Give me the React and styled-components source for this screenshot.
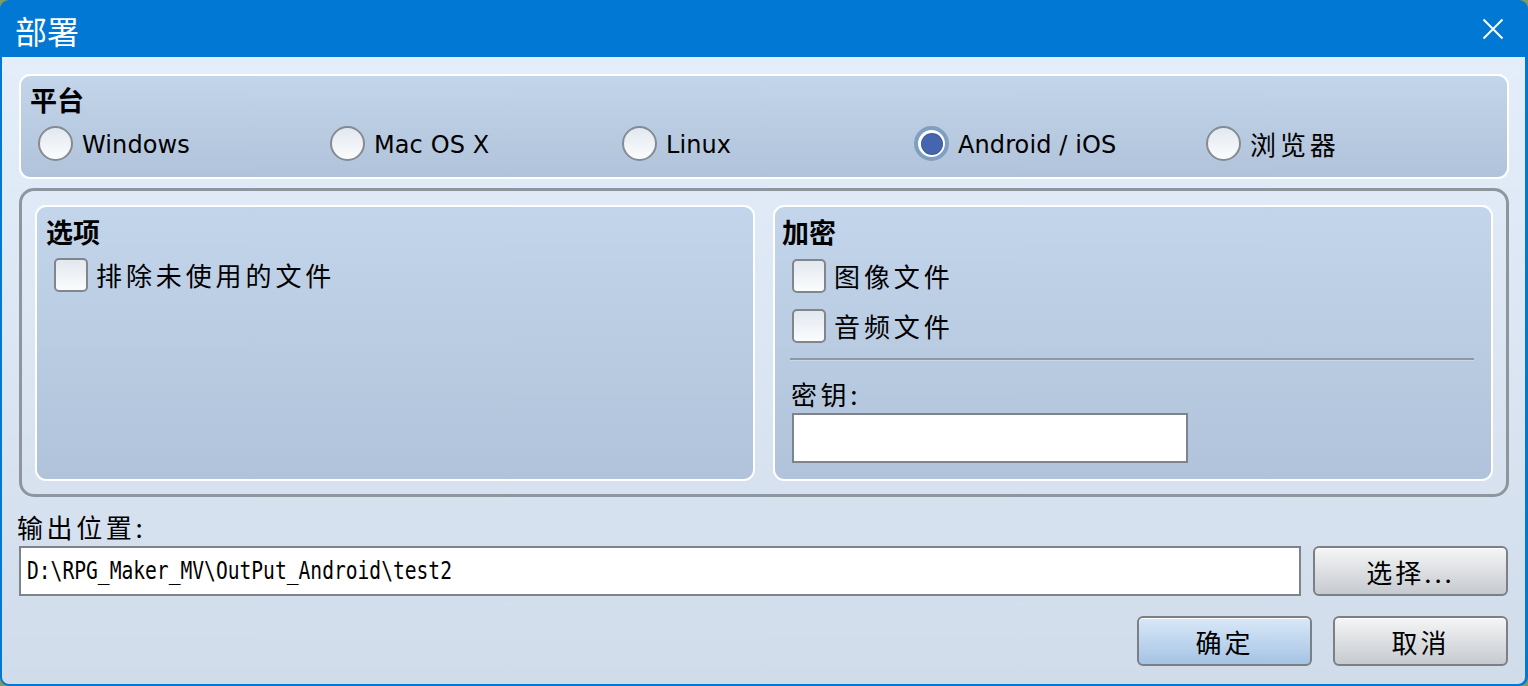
import React from 'react';
import styled, { createGlobalStyle } from 'styled-components';

const GlobalStyle = createGlobalStyle`
  html, body {
    margin: 0;
    padding: 0;
    background: #7f9c5c;
  }
  * {
    box-sizing: border-box;
  }
`;

const Window = styled.div`
  width: 1528px;
  height: 686px;
  display: flex;
  flex-direction: column;
  background: #0078d4;
  border-radius: 9px;
  overflow: hidden;
  font-family: "DejaVu Sans", "Noto Sans CJK SC", sans-serif;
  color: #000;
`;

const TitleBar = styled.div`
  height: 57px;
  flex-shrink: 0;
  display: flex;
  align-items: center;
  justify-content: space-between;
  padding: 2px 24px 0 15px;
  color: #fff;
  font-family: "Noto Sans CJK SC", sans-serif;
  font-size: 32px;
`;

const CloseButton = styled.div`
  width: 22px;
  height: 22px;
  display: flex;
  align-items: center;
  justify-content: center;
  margin-bottom: 2px;
`;

const Body = styled.div`
  flex: 1;
  margin: 0 3px 2px 2px;
  display: flex;
  flex-direction: column;
  padding: 17px 16px 0 17px;
  background: linear-gradient(#e4eefb, #d1dcea);
  border-radius: 0 0 7px 7px;
`;

const Panel = styled.div`
  border: 2px solid #fff;
  border-radius: 11px;
  background: linear-gradient(#c3d5ea, #b0c3da);
  height: ${p => (p.$height ? `${p.$height}px` : 'auto')};
  padding: ${p => p.$padding};
  display: flex;
  flex-direction: column;
`;

const GroupHeader = styled.div`
  font-family: "Noto Sans CJK SC", sans-serif;
  font-weight: 700;
  font-size: 27px;
  line-height: 32px;
  height: 32px;
`;

const RadioRow = styled.div`
  display: flex;
  margin-top: 10px;
  padding-left: 8px;
`;

const RadioItem = styled.label`
  width: 292px;
  display: flex;
  align-items: center;
  gap: 9px;
`;

const Radio = styled.span`
  width: 35px;
  height: 35px;
  border-radius: 50%;
  flex-shrink: 0;
  display: flex;
  align-items: center;
  justify-content: center;
  border: ${p => (p.$checked ? '4px solid #7f9fc2' : '2px solid #868b92')};
  background: ${p => (p.$checked ? '#fff' : 'linear-gradient(#e2e8ef, #fbfcfd)')};

  &::after {
    content: '';
    display: ${p => (p.$checked ? 'block' : 'none')};
    width: 20px;
    height: 20px;
    border-radius: 50%;
    background: #4566ae;
    box-shadow: 0 0 0 1px #3d5c9e;
  }
`;

const Label = styled.span`
  font-family: ${p => (p.$cjk ? '"Noto Sans CJK SC", sans-serif' : '"DejaVu Sans", sans-serif')};
  font-size: ${p => (p.$cjk ? '26px' : '24px')};
  letter-spacing: ${p => (p.$cjk ? '3.9px' : '0.1px')};
  line-height: 32px;
  padding-top: ${p => (p.$cjk ? 0 : 3)}px;
  white-space: nowrap;
`;

const OptionsFrame = styled.div`
  margin-top: 9px;
  height: 309px;
  border: 3px solid #8e959e;
  border-radius: 15px;
  padding: 14px 13px 13px;
  display: grid;
  grid-template-columns: 1fr 1fr;
  gap: 18px;
`;

const CheckRow = styled.label`
  display: flex;
  align-items: center;
  gap: 8px;
  height: 34px;
  margin-top: ${p => p.$top}px;
  padding-left: ${p => p.$indent}px;
`;

const Checkbox = styled.span`
  width: 34px;
  height: 34px;
  flex-shrink: 0;
  border: 2px solid #81868d;
  border-radius: 5px;
  background: linear-gradient(#e2e8ef, #fbfcfd);
`;

const Separator = styled.div`
  margin: 15px 17px 0 8px;
  border-top: 2px solid #8d99a7;
  border-bottom: 1px solid #cbd7e4;
`;

const FieldLabel = styled.div`
  font-family: "Noto Sans CJK SC", sans-serif;
  font-size: 26px;
  letter-spacing: 3.6px;
  line-height: 32px;
  margin-top: ${p => p.$top}px;
  margin-left: ${p => p.$indent || 0}px;
`;

const TextBox = styled.div`
  height: 50px;
  width: ${p => (p.$width ? `${p.$width}px` : 'auto')};
  flex: ${p => (p.$width ? '0 0 auto' : '1')};
  background: #fff;
  border: 2px solid #7e848b;
  display: flex;
  align-items: center;
  padding-left: 6px;
  overflow: hidden;
`;

const MonoText = styled.span`
  font-family: "DejaVu Sans Mono", monospace;
  font-size: 24px;
  display: inline-block;
  transform: scaleX(0.817);
  transform-origin: left center;
  white-space: nowrap;
`;

const Row = styled.div`
  display: flex;
  gap: ${p => p.$gap}px;
  margin-top: ${p => p.$top}px;
  padding-left: ${p => p.$left || 0}px;
  padding-right: ${p => p.$right || 0}px;
  justify-content: ${p => p.$justify || 'flex-start'};
`;

const Button = styled.button`
  width: ${p => p.$width}px;
  height: 50px;
  flex-shrink: 0;
  border: 2px solid #7b8087;
  border-radius: 6px;
  background: ${p =>
    p.$primary
      ? 'linear-gradient(#d9e8f8, #a5c3e4)'
      : 'linear-gradient(#f4f5f6, #c6cacf)'};
  box-shadow: inset 0 1px 0 #fff;
  font-family: "Noto Sans CJK SC", sans-serif;
  font-size: 26px;
  letter-spacing: 3px;
  color: #000;
  padding: 0;
  display: flex;
  align-items: center;
  justify-content: center;
`;

const platforms = [
  { name: 'Windows' },
  { name: 'Mac OS X' },
  { name: 'Linux' },
  { name: 'Android / iOS', checked: true },
  { name: '浏览器', cjk: true },
];

export default function App() {
  return (
    <>
      <GlobalStyle />
      <Window>
        <TitleBar>
          <span>部署</span>
          <CloseButton>
            <svg width="22" height="22" viewBox="0 0 22 22">
              <path d="M1.5 1.5 L20.5 20.5 M20.5 1.5 L1.5 20.5" stroke="#fff" strokeWidth="2" />
            </svg>
          </CloseButton>
        </TitleBar>
        <Body>
          <Panel $height={105} $padding="8px 9px 0">
            <GroupHeader>平台</GroupHeader>
            <RadioRow>
              {platforms.map(p => (
                <RadioItem key={p.name}>
                  <Radio $checked={p.checked} />
                  <Label $cjk={p.cjk}>{p.name}</Label>
                </RadioItem>
              ))}
            </RadioRow>
          </Panel>

          <OptionsFrame>
            <Panel $padding="9px 0 0 9px">
              <GroupHeader>选项</GroupHeader>
              <CheckRow $top={10} $indent={8}>
                <Checkbox />
                <Label $cjk>排除未使用的文件</Label>
              </CheckRow>
            </Panel>
            <Panel $padding="9px 0 0 7px">
              <GroupHeader>加密</GroupHeader>
              <CheckRow $top={11} $indent={10}>
                <Checkbox />
                <Label $cjk>图像文件</Label>
              </CheckRow>
              <CheckRow $top={16} $indent={10}>
                <Checkbox />
                <Label $cjk>音频文件</Label>
              </CheckRow>
              <Separator />
              <FieldLabel $top={17} $indent={9}>密钥:</FieldLabel>
              <Row $top={3} $gap={0} $left={10}>
                <TextBox $width={396} />
              </Row>
            </Panel>
          </OptionsFrame>

          <FieldLabel $top={14} $indent={-2}>输出位置:</FieldLabel>
          <Row $top={3} $gap={12} $right={1}>
            <TextBox>
              <MonoText>D:\RPG_Maker_MV\OutPut_Android\test2</MonoText>
            </TextBox>
            <Button $width={195}>选择...</Button>
          </Row>
          <Row $top={20} $gap={21} $right={1} $justify="flex-end">
            <Button $width={175} $primary>确定</Button>
            <Button $width={175}>取消</Button>
          </Row>
        </Body>
      </Window>
    </>
  );
}
